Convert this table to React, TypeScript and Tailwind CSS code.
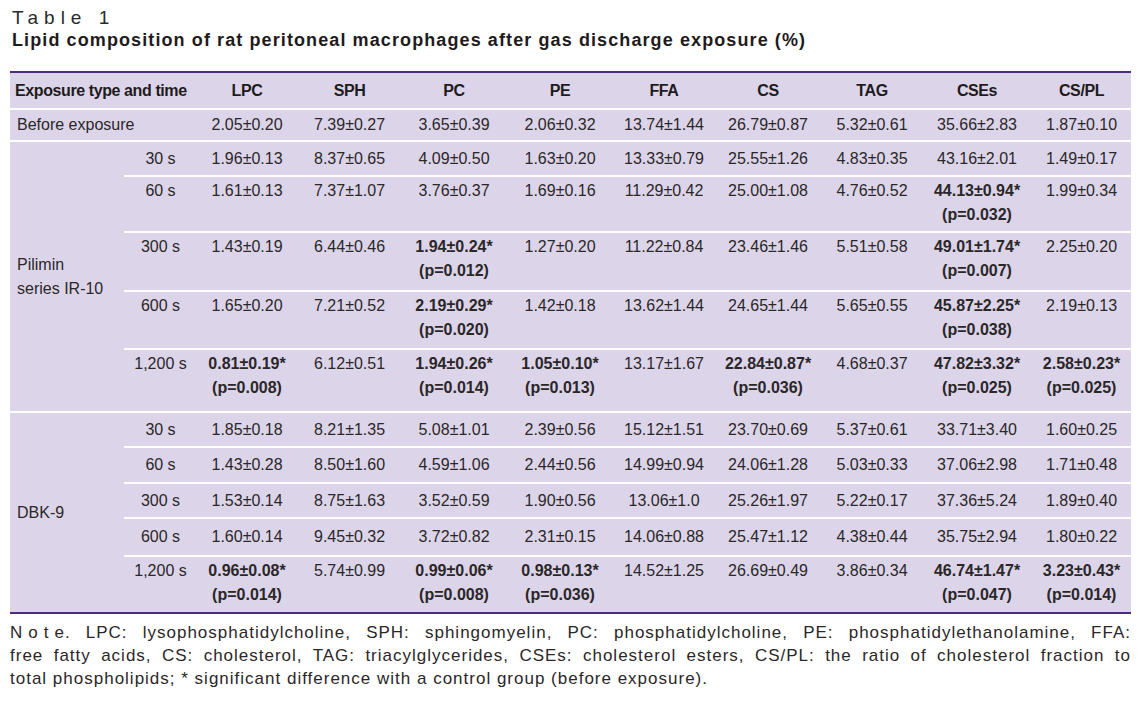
const heads = ['LPC', 'SPH', 'PC', 'PE', 'FFA', 'CS', 'TAG', 'CSEs', 'CS/PL']

type Row = {
  group?: string
  span?: number
  time: string
  cells: string[]
  h: string
  two?: boolean
  last?: boolean
}

const pilimin: Row[] = [
  { group: 'Pilimin series IR-10', span: 5, time: '30 s', h: 'h-[35px]', cells: ['1.96±0.13', '8.37±0.65', '4.09±0.50', '1.63±0.20', '13.33±0.79', '25.55±1.26', '4.83±0.35', '43.16±2.01', '1.49±0.17'] },
  { time: '60 s', h: 'h-[56px]', two: true, cells: ['1.61±0.13', '7.37±1.07', '3.76±0.37', '1.69±0.16', '11.29±0.42', '25.00±1.08', '4.76±0.52', '44.13±0.94*|0.032', '1.99±0.34'] },
  { time: '300 s', h: 'h-[59px]', two: true, cells: ['1.43±0.19', '6.44±0.46', '1.94±0.24*|0.012', '1.27±0.20', '11.22±0.84', '23.46±1.46', '5.51±0.58', '49.01±1.74*|0.007', '2.25±0.20'] },
  { time: '600 s', h: 'h-[58px]', two: true, cells: ['1.65±0.20', '7.21±0.52', '2.19±0.29*|0.020', '1.42±0.18', '13.62±1.44', '24.65±1.44', '5.65±0.55', '45.87±2.25*|0.038', '2.19±0.13'] },
  { time: '1,200 s', h: 'h-[63px]', two: true, cells: ['0.81±0.19*|0.008', '6.12±0.51', '1.94±0.26*|0.014', '1.05±0.10*|0.013', '13.17±1.67', '22.84±0.87*|0.036', '4.68±0.37', '47.82±3.32*|0.025', '2.58±0.23*|0.025'] },
]

const dbk: Row[] = [
  { group: 'DBK-9', span: 5, time: '30 s', h: 'h-[35px]', cells: ['1.85±0.18', '8.21±1.35', '5.08±1.01', '2.39±0.56', '15.12±1.51', '23.70±0.69', '5.37±0.61', '33.71±3.40', '1.60±0.25'] },
  { time: '60 s', h: 'h-[36px]', cells: ['1.43±0.28', '8.50±1.60', '4.59±1.06', '2.44±0.56', '14.99±0.94', '24.06±1.28', '5.03±0.33', '37.06±2.98', '1.71±0.48'] },
  { time: '300 s', h: 'h-[35px]', cells: ['1.53±0.14', '8.75±1.63', '3.52±0.59', '1.90±0.56', '13.06±1.0', '25.26±1.97', '5.22±0.17', '37.36±5.24', '1.89±0.40'] },
  { time: '600 s', h: 'h-[38px]', cells: ['1.60±0.14', '9.45±0.32', '3.72±0.82', '2.31±0.15', '14.06±0.88', '25.47±1.12', '4.38±0.44', '35.75±2.94', '1.80±0.22'] },
  { time: '1,200 s', h: 'h-[57px]', two: true, last: true, cells: ['0.96±0.08*|0.014', '5.74±0.99', '0.99±0.06*|0.008', '0.98±0.13*|0.036', '14.52±1.25', '26.69±0.49', '3.86±0.34', '46.74±1.47*|0.047', '3.23±0.43*|0.014'] },
]

const before = ['2.05±0.20', '7.39±0.27', '3.65±0.39', '2.06±0.32', '13.74±1.44', '26.79±0.87', '5.32±0.61', '35.66±2.83', '1.87±0.10']

function Value({ v }: { v: string }) {
  const [val, p] = v.split('|')
  if (!p) return <>{val}</>
  return (
    <div className="font-bold">
      <div>{val}</div>
      <div>(p={p})</div>
    </div>
  )
}

function BodyRow({ row }: { row: Row }) {
  const line = row.last ? '' : 'border-b-2 border-white'
  const align = row.two ? 'align-top pt-[2px]' : 'align-middle'
  return (
    <tr className={row.h}>
      {row.group && (
        <td rowSpan={row.span} className={`pl-[7px] align-middle text-left ${row.group === 'DBK-9' ? '' : 'border-b-2 border-white'}`}>
          {row.group === 'Pilimin series IR-10' ? (
            <>
              Pilimin
              <br />
              series IR-10
            </>
          ) : (
            row.group
          )}
        </td>
      )}
      <td className={`${line} ${align} text-center`}>{row.time}</td>
      {row.cells.map((c, i) => (
        <td key={i} className={`${line} ${align} text-center`}>
          <Value v={c} />
        </td>
      ))}
    </tr>
  )
}

export default function App() {
  return (
    <div className="h-[706px] w-[1144px] bg-white px-[10px] pt-[7px] font-['Liberation_Sans',Arial,sans-serif] text-[#2b2728]">
      <p className="pl-[2px] text-[19px] leading-[22px] tracking-[6px] text-[#2a2a2a]">Table 1</p>
      <h1 className="pl-[2px] text-[18px] font-bold leading-[22px] tracking-[1.1px] text-[#1f1b1c]">
        Lipid composition of rat peritoneal macrophages after gas discharge exposure (%)
      </h1>
      <table className="mt-[20px] w-[1121px] table-fixed border-collapse border-y-2 border-[#4e2a80] bg-[#dcd5ea] text-[16px] leading-[24px]">
        <colgroup>
          <col className="w-[114px]" />
          <col className="w-[73px]" />
          <col className="w-[100px]" />
          <col className="w-[105px]" />
          <col className="w-[104px]" />
          <col className="w-[108px]" />
          <col className="w-[100px]" />
          <col className="w-[108px]" />
          <col className="w-[100px]" />
          <col className="w-[110px]" />
          <col className="w-[99px]" />
        </colgroup>
        <thead>
          <tr className="h-[37px] whitespace-nowrap text-[16px] font-bold tracking-[-0.4px] text-[#1f1b1c]">
            <th colSpan={2} className="border-b-2 border-white pl-[5px] text-left font-bold">
              Exposure type and time
            </th>
            {heads.map((h) => (
              <th key={h} className="border-b-2 border-white text-center font-bold">
                {h}
              </th>
            ))}
          </tr>
        </thead>
        <tbody>
          <tr className="h-[32px]">
            <td colSpan={2} className="border-b-2 border-white pl-[7px] text-left align-middle">
              Before exposure
            </td>
            {before.map((c, i) => (
              <td key={i} className="border-b-2 border-white text-center align-middle">
                {c}
              </td>
            ))}
          </tr>
          {pilimin.map((r) => (
            <BodyRow key={'p' + r.time} row={r} />
          ))}
          {dbk.map((r) => (
            <BodyRow key={'d' + r.time} row={r} />
          ))}
        </tbody>
      </table>
      <div className="mt-[7px] w-[1121px] text-[17px] leading-[23px] tracking-[1px] text-[#2b2728]">
        <p className="text-justify [text-align-last:justify]">
          <span className="tracking-[6px]">Not</span>e. LPC: lysophosphatidylcholine, SPH: sphingomyelin, PC: phosphatidylcholine, PE: phosphatidylethanolamine, FFA:
        </p>
        <p className="text-justify [text-align-last:justify]">
          free fatty acids, CS: cholesterol, TAG: triacylglycerides, CSEs: cholesterol esters, CS/PL: the ratio of cholesterol fraction to
        </p>
        <p>total phospholipids; * significant difference with a control group (before exposure).</p>
      </div>
    </div>
  )
}
